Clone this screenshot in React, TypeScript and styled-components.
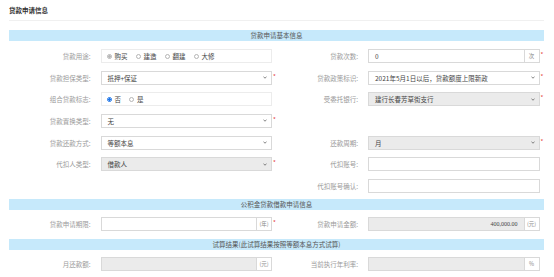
import React from "react";
import styled, { createGlobalStyle } from "styled-components";

const GlobalStyle = createGlobalStyle`
  html, body {
    margin: 0;
    padding: 0;
    background: #ffffff;
  }
  body {
    font-family: "Noto Sans CJK SC", "Noto Sans", sans-serif;
  }
`;

const Page = styled.div`
  width: 554px;
  box-sizing: border-box;
  padding: 5px 10px 0 9px;
`;

const Title = styled.div`
  font-size: 6.5px;
  line-height: 10px;
  font-weight: 700;
  color: #333;
  padding-bottom: 5px;
  border-bottom: 1px solid #f0f0f0;
  margin-bottom: 9px;
`;

const Band = styled.div`
  height: 11px;
  line-height: 11px;
  background-color: #c6e9fb;
  text-align: center;
  font-size: 6.5px;
  color: #555;
`;

const FormGrid = styled.div<{ $top: number; $bottom: number }>`
  display: grid;
  grid-template-columns: 1fr 1fr;
  row-gap: 7.67px;
  padding: ${(p) => p.$top}px 0 ${(p) => p.$bottom}px;
`;

const Field = styled.div`
  display: grid;
  grid-template-columns: 91.5px 1fr 4.5px;
  align-items: center;
  height: 14px;
`;

const Label = styled.label`
  text-align: right;
  padding-right: 10px;
  font-size: 6.5px;
  color: #9a9a9a;
  white-space: nowrap;
`;

const Box = styled.div<{ $gray?: boolean; $plain?: boolean }>`
  height: 14px;
  box-sizing: border-box;
  border: 1px solid ${(p) => (p.$plain ? "#ececec" : "#d9d9d9")};
  background-color: ${(p) => (p.$gray ? "#ebebeb" : "#ffffff")};
  display: flex;
  align-items: center;
  font-size: 6.5px;
  color: #444;
  overflow: hidden;
`;

const Value = styled.span<{ $right?: boolean; $serif?: boolean }>`
  flex: 1;
  padding: 0 6px;
  text-align: ${(p) => (p.$right ? "right" : "left")};
  white-space: nowrap;
  font-family: ${(p) =>
    p.$serif ? '"Liberation Serif", serif' : "inherit"};
  font-size: ${(p) => (p.$serif ? "6px" : "6.5px")};
`;

const Addon = styled.span`
  width: 15px;
  height: 100%;
  box-sizing: border-box;
  border-left: 1px solid #d9d9d9;
  background: #ffffff;
  display: flex;
  align-items: center;
  justify-content: center;
  font-size: 5.5px;
  color: #888;
  flex-shrink: 0;
`;

const Star = styled.span`
  color: #e5393a;
  font-size: 6px;
  line-height: 6px;
  padding-left: 1px;
  align-self: start;
  margin-top: 3px;
`;

const Arrow = styled.svg`
  width: 4px;
  height: 3px;
  margin-right: 4px;
  flex-shrink: 0;
`;

const RadioGroup = styled.div`
  display: flex;
  align-items: center;
  padding-left: 5px;
  gap: 8px;
`;

const RadioItem = styled.span`
  display: flex;
  align-items: center;
  gap: 3px;
  font-size: 6.5px;
  color: #444;
`;

const RadioDot = styled.span<{ $checked?: boolean; $disabled?: boolean }>`
  width: 5px;
  height: 5px;
  border-radius: 50%;
  box-sizing: border-box;
  border: 1px solid
    ${(p) => (p.$checked && !p.$disabled ? "#1a73e8" : "#b5b5b5")};
  background: ${(p) =>
    p.$checked
      ? p.$disabled
        ? "radial-gradient(circle, #b8b8b8 0 1.2px, #ececec 1.3px)"
        : "radial-gradient(circle, #1a73e8 0 1.2px, #ffffff 1.3px)"
      : "#ffffff"};
`;

const Empty = styled.div``;

const ChevronDown = () => (
  <Arrow viewBox="0 0 8 6">
    <path d="M1 1.2 L4 4.5 L7 1.2" fill="none" stroke="#555" strokeWidth="1.4" />
  </Arrow>
);

type FieldProps = {
  label?: string;
  required?: boolean;
  children?: React.ReactNode;
};

const FormField: React.FC<FieldProps> = ({ label, required, children }) => (
  <Field>
    <Label>{label}</Label>
    {children}
    {required ? <Star>*</Star> : <span />}
  </Field>
);

const SelectBox: React.FC<{ value: string; gray?: boolean }> = ({ value, gray }) => (
  <Box $gray={gray}>
    <Value>{value}</Value>
    <ChevronDown />
  </Box>
);

const App: React.FC = () => {
  return (
    <Page>
      <GlobalStyle />
      <Title>贷款申请信息</Title>

      <Band>贷款申请基本信息</Band>
      <FormGrid $top={8} $bottom={6}>
        <FormField label="贷款用途:">
          <Box $plain>
            <RadioGroup>
              <RadioItem>
                <RadioDot $checked $disabled />
                购买
              </RadioItem>
              <RadioItem>
                <RadioDot />
                建造
              </RadioItem>
              <RadioItem>
                <RadioDot />
                翻建
              </RadioItem>
              <RadioItem>
                <RadioDot />
                大修
              </RadioItem>
            </RadioGroup>
          </Box>
        </FormField>
        <FormField label="贷款次数:" required>
          <Box>
            <Value>0</Value>
            <Addon>次</Addon>
          </Box>
        </FormField>

        <FormField label="贷款担保类型:" required>
          <SelectBox value="抵押+保证" />
        </FormField>
        <FormField label="贷款政策标识:" required>
          <SelectBox value="2021年5月1日以后，贷款额度上限新政" />
        </FormField>

        <FormField label="组合贷款标志:">
          <Box $plain>
            <RadioGroup>
              <RadioItem>
                <RadioDot $checked />
                否
              </RadioItem>
              <RadioItem>
                <RadioDot />
                是
              </RadioItem>
            </RadioGroup>
          </Box>
        </FormField>
        <FormField label="受委托银行:" required>
          <SelectBox value="建行长春芳草街支行" gray />
        </FormField>

        <FormField label="贷款置换类型:" required>
          <SelectBox value="无" />
        </FormField>
        <Empty />

        <FormField label="贷款还款方式:">
          <SelectBox value="等额本息" />
        </FormField>
        <FormField label="还款周期:" required>
          <SelectBox value="月" gray />
        </FormField>

        <FormField label="代扣人类型:" required>
          <SelectBox value="借款人" gray />
        </FormField>
        <FormField label="代扣账号:">
          <Box />
        </FormField>

        <Empty />
        <FormField label="代扣账号确认:">
          <Box />
        </FormField>
      </FormGrid>

      <Band>公积金贷款借款申请信息</Band>
      <FormGrid $top={7} $bottom={8}>
        <FormField label="贷款申请期限:" required>
          <Box>
            <Value />
            <Addon>(年)</Addon>
          </Box>
        </FormField>
        <FormField label="贷款申请金额:">
          <Box $gray>
            <Value $right $serif>
              400,000.00
            </Value>
            <Addon>(元)</Addon>
          </Box>
        </FormField>
      </FormGrid>

      <Band>试算结果(此试算结果按照等额本息方式试算)</Band>
      <FormGrid $top={7} $bottom={0}>
        <FormField label="月还款额:">
          <Box $gray>
            <Value />
            <Addon>(元)</Addon>
          </Box>
        </FormField>
        <FormField label="当前执行年利率:">
          <Box $gray>
            <Value />
            <Addon>%</Addon>
          </Box>
        </FormField>
      </FormGrid>
    </Page>
  );
};

export default App;
